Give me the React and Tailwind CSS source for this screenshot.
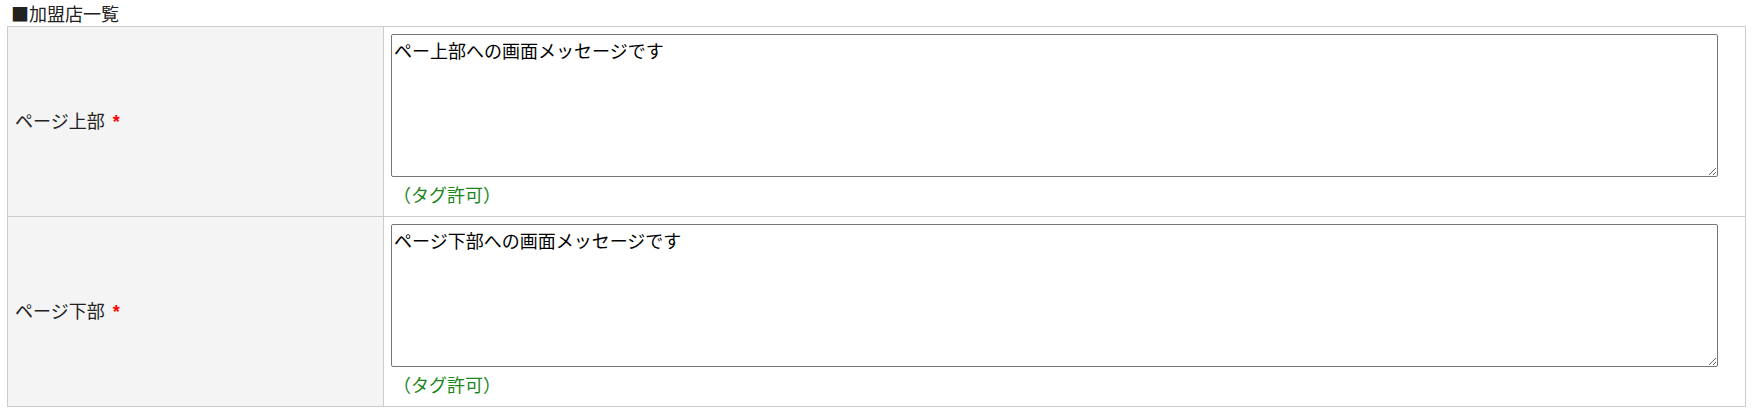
const rows = [
  { label: 'ページ上部', value: 'ペー上部への画面メッセージです' },
  { label: 'ページ下部', value: 'ページ下部への画面メッセージです' },
];

export default function App() {
  return (
    <div className="min-h-[412px] bg-white px-[7px] pt-[2px] text-[18px] text-[#222] [font-family:'Noto_Sans_CJK_JP','Noto_Sans',sans-serif]">
      <p className="h-[24px] pl-[4px] leading-[22px]">■加盟店一覧</p>
      <table className="w-full border-collapse">
        <tbody>
          {rows.map((row) => (
            <tr key={row.label}>
              <th className="w-[376px] border border-[#cccccc] bg-[#f3f4f3] px-[7px] text-left align-middle font-normal">
                {row.label}
                <span className="ml-[8px] font-bold text-[#ff0000] [font-family:'Liberation_Sans',sans-serif]">*</span>
              </th>
              <td className="h-[190px] border border-[#cccccc] px-[7px] pt-[7px] pb-[7px] align-top">
                <textarea
                  defaultValue={row.value}
                  className="block h-[143px] w-[1327px] rounded-[2px] border border-[#767676] p-[2px] leading-[27px] text-black"
                />
                <p className="mt-[4px] pl-[2px] leading-[27px] text-[#1a861a]">（タグ許可）</p>
              </td>
            </tr>
          ))}
        </tbody>
      </table>
    </div>
  );
}
